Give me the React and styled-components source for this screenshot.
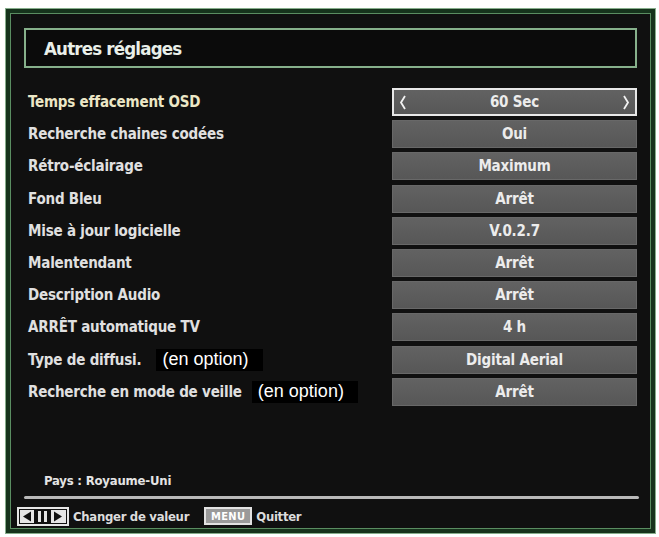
import React from "react";
import styled, { createGlobalStyle } from "styled-components";

const GlobalStyle = createGlobalStyle`
  html, body {
    margin: 0;
    padding: 0;
    background: #ffffff;
  }
  body {
    font-family: "DejaVu Sans Condensed", "DejaVu Sans", sans-serif;
    font-stretch: condensed;
  }
`;

const settings = [
  { label: "Temps effacement OSD", value: "60 Sec", selected: true },
  { label: "Recherche chaines codées", value: "Oui" },
  { label: "Rétro-éclairage", value: "Maximum" },
  { label: "Fond Bleu", value: "Arrêt" },
  { label: "Mise à jour logicielle", value: "V.0.2.7" },
  { label: "Malentendant", value: "Arrêt" },
  { label: "Description Audio", value: "Arrêt" },
  { label: "ARRÊT automatique TV", value: "4 h" },
  { label: "Type de diffusi.", value: "Digital Aerial", note: "(en option)", noteGap: 15 },
  { label: "Recherche en mode de veille", value: "Arrêt", note: "(en option)", noteGap: 10 },
];

export default function App() {
  return (
    <>
      <GlobalStyle />
      <Panel>
        <TitleBox>
          <Title>Autres réglages</Title>
        </TitleBox>
        <List>
          {settings.map((s) => (
            <Row key={s.label}>
              <Label $selected={s.selected}>
                {s.label}
                {s.note && <Note style={{ marginLeft: s.noteGap }}>{s.note}</Note>}
              </Label>
              <ValueBox $selected={s.selected}>
                {s.selected && <Chevron dir="left" />}
                <ValueText>{s.value}</ValueText>
                {s.selected && <Chevron dir="right" />}
              </ValueBox>
            </Row>
          ))}
        </List>
        <Spacer />
        <Country>Pays : Royaume-Uni</Country>
        <Separator />
        <Footer>
          <ArrowsKey />
          <Hint>Changer de valeur</Hint>
          <MenuKey>MENU</MenuKey>
          <Hint>Quitter</Hint>
        </Footer>
      </Panel>
    </>
  );
}

function Chevron({ dir }) {
  const points = dir === "left" ? "6,1 2,7.5 6,14" : "2,1 6,7.5 2,14";
  return (
    <svg width="8" height="15" viewBox="0 0 8 15">
      <polyline points={points} fill="none" stroke="#f2f2f2" strokeWidth="1.8" />
    </svg>
  );
}

function ArrowsKey() {
  return (
    <svg width="52" height="19" viewBox="0 0 52 19">
      <rect x="1" y="1" width="50" height="17" fill="#111" stroke="#e6e6e6" strokeWidth="2" />
      <rect x="3" y="3" width="14" height="13" fill="#e6e6e6" />
      <polygon points="14,4.5 14,14.5 6,9.5" fill="#111" />
      <rect x="21" y="4" width="3" height="11" fill="#e6e6e6" />
      <rect x="27" y="4" width="3" height="11" fill="#e6e6e6" />
      <rect x="34" y="3" width="15" height="13" fill="#e6e6e6" />
      <polygon points="37,4.5 37,14.5 45,9.5" fill="#111" />
    </svg>
  );
}

const Panel = styled.div`
  box-sizing: border-box;
  margin: 8px 0 0 5px;
  width: 651px;
  height: 526px;
  padding: 19px 16px 0 11px;
  display: flex;
  flex-direction: column;
  background: #101010;
  border: 1px solid #86ad8b;
  box-shadow: inset 0 0 0 4px #16331c, inset 0 0 0 5px #5a8d61;
`;

const TitleBox = styled.div`
  box-sizing: border-box;
  height: 40px;
  margin: 0 2px 0 7px;
  padding-left: 18px;
  display: flex;
  align-items: center;
  border: 2px solid #86b08b;
  background: #0b0b0b;
`;

const Title = styled.h1`
  margin: 0;
  font-size: 18.5px;
  font-weight: bold;
  letter-spacing: -0.8px;
  color: #e9efe9;
`;

const List = styled.div`
  margin: 20px 2px 0 11px;
  display: flex;
  flex-direction: column;
  gap: 4.2px;
`;

const Row = styled.div`
  display: grid;
  grid-template-columns: 1fr 245px;
  align-items: center;
  height: 28px;
`;

const Label = styled.div`
  display: flex;
  align-items: center;
  font-size: 15px;
  font-weight: bold;
  letter-spacing: -0.2px;
  color: ${(p) => (p.$selected ? "#ece7c6" : "#e0e0e0")};
  white-space: nowrap;
`;

const Note = styled.span`
  padding: 0 14px 1px 6px;
  background: #000;
  font-family: "Liberation Sans", Arial, sans-serif;
  font-stretch: normal;
  font-weight: normal;
  font-size: 18px;
  letter-spacing: 0;
  color: #ffffff;
`;

const ValueBox = styled.div`
  box-sizing: border-box;
  height: 28px;
  padding: 0 5px;
  display: flex;
  align-items: center;
  justify-content: space-between;
  background: linear-gradient(#626262, #575757);
  border: ${(p) => (p.$selected ? "2px solid #e8e8e8" : "1px solid #686868")};
`;

const ValueText = styled.span`
  flex: 1;
  text-align: center;
  font-size: 15px;
  font-weight: bold;
  letter-spacing: -0.2px;
  color: #ececec;
`;

const Spacer = styled.div`
  flex: 1;
`;

const Country = styled.div`
  padding-left: 27px;
  font-size: 13px;
  font-weight: bold;
  letter-spacing: -0.2px;
  color: #e4e4e4;
`;

const Separator = styled.div`
  height: 3px;
  margin: 8px 0 0 7px;
  background: #b9b9b9;
  border-radius: 2px;
`;

const Footer = styled.div`
  height: 34px;
  display: flex;
  align-items: center;
  gap: 4px;
`;

const Hint = styled.span`
  font-size: 13px;
  font-weight: bold;
  letter-spacing: -0.3px;
  color: #dcdcdc;
  margin-right: 11px;
`;

const MenuKey = styled.span`
  box-sizing: border-box;
  height: 18px;
  padding: 0 5px;
  display: flex;
  align-items: center;
  border: 2px solid #e2e2e2;
  background: #9a9a9a;
  font-family: "DejaVu Sans", sans-serif;
  font-size: 11px;
  font-weight: bold;
  color: #ffffff;
  letter-spacing: 0.3px;
`;
